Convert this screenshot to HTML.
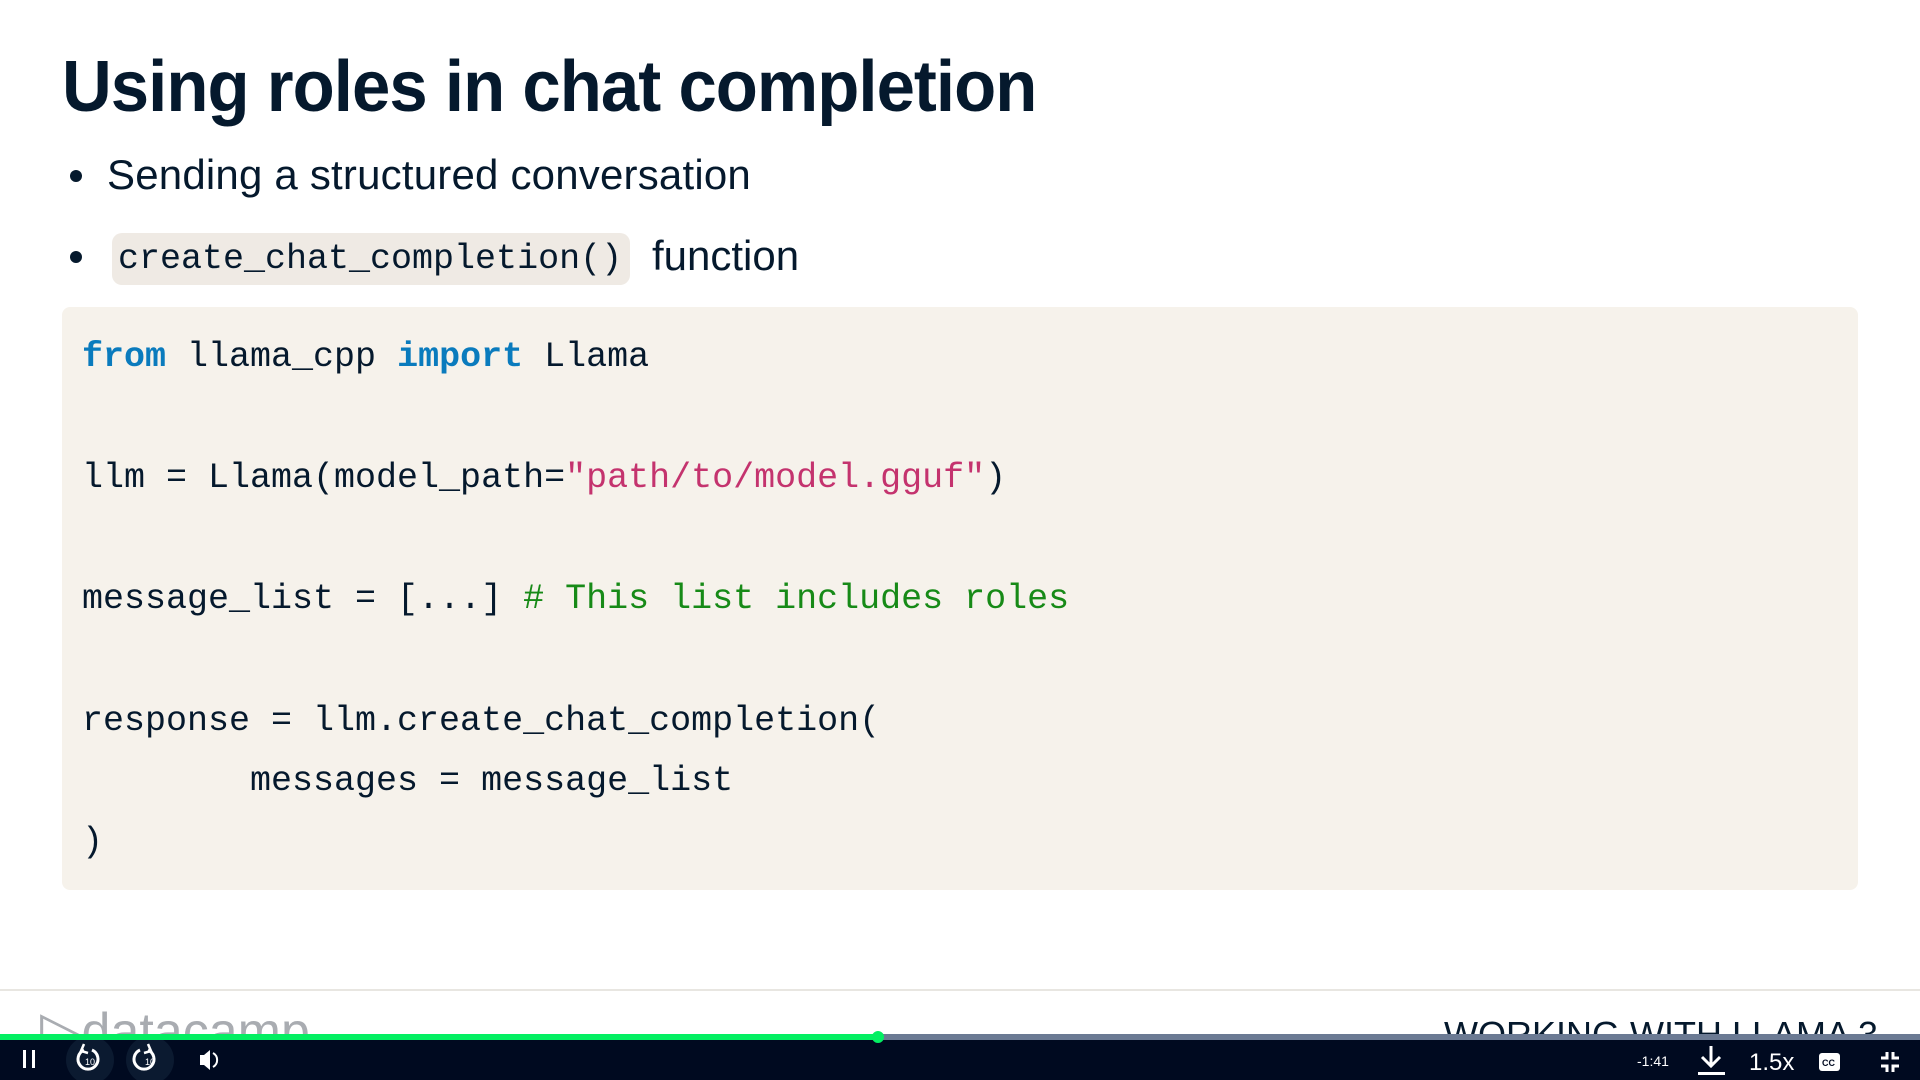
<!DOCTYPE html>
<html><head><meta charset="utf-8"><style>
html,body{margin:0;padding:0;width:1920px;height:1080px;overflow:hidden;background:#fff;font-family:"Liberation Sans",sans-serif;color:#05192d}
.abs{position:absolute;white-space:pre}
.title{left:62px;top:42px;font-size:72px;font-weight:bold;line-height:90px;transform-origin:left top;transform:scaleX(0.957);letter-spacing:-1px}
.b{font-size:42px;line-height:50px}
.dot{width:12px;height:12px;border-radius:50%;background:#05192d;position:absolute}
.mono{font-family:"Liberation Mono",monospace}
.code{left:62px;top:307px;width:1796px;height:583px;background:#f6f2eb;border-radius:8px;position:absolute}
.lines{left:82px;top:327px;font-size:35px;line-height:60.6px;color:#05192d}
.kw{color:#0a7bbd;font-weight:bold}.st{color:#c4336e}.cm{color:#178a17}
</style></head><body>
<div class="abs title">Using roles in chat completion</div>
<div class="dot" style="left:70px;top:170px"></div>
<div class="abs b" style="left:107px;top:150px;letter-spacing:0.2px">Sending a structured conversation</div>
<div class="dot" style="left:70px;top:251px"></div>
<div class="abs" style="left:112px;top:233px;width:518px;height:52px;background:#efeae4;border-radius:10px"></div>
<div class="abs mono" style="left:118px;top:233px;font-size:35px;line-height:52px">create_chat_completion()</div>
<div class="abs b" style="left:652px;top:231px">function</div>
<div class="code"></div>
<div class="abs mono lines"><span class="kw">from</span> llama_cpp <span class="kw">import</span> Llama

llm = Llama(model_path=<span class="st">"path/to/model.gguf"</span>)

message_list = [...] <span class="cm"># This list includes roles</span>

response = llm.create_chat_completion(
        messages = message_list
)</div>
<div class="abs" style="left:0;top:989px;width:1920px;height:2px;background:#e8e6e1"></div>
<div class="abs" style="left:40px;top:1003px;font-size:52px;color:#a9acb1;line-height:56px"><span style="font-size:54px">&#9655;</span>datacamp</div>
<div class="abs" style="left:1444px;top:1013px;font-size:36px;line-height:44px;color:#05192d">WORKING WITH LLAMA 3</div>
<div class="abs" style="left:0;top:1039px;width:1920px;height:41px;background:#000a20"></div>
<div class="abs" style="left:0;top:1034px;width:1920px;height:6px;background:#6b7a93"></div>
<div class="abs" style="left:0;top:1034px;width:878px;height:6px;background:#03ef62"></div>
<div class="abs" style="left:872px;top:1031px;width:12px;height:12px;border-radius:50%;background:#03ef62"></div>
<svg class="abs" style="left:0;top:1040px" width="1920" height="40">
<rect x="23" y="10" width="3" height="18" fill="#fff"/><rect x="32" y="10" width="3" height="18" fill="#fff"/>
<circle cx="90" cy="20" r="24" fill="#0b1a30"/><circle cx="150" cy="20" r="24" fill="#0b1a30"/>
<path d="M84 10a10 10 0 1 0 8 0" stroke="#fff" stroke-width="3" fill="none"/><path d="M84 4l-3 7 7 2" stroke="#fff" stroke-width="2.5" fill="none"/>
<text x="90" y="25" font-size="9" fill="#fff" text-anchor="middle" font-family="Liberation Sans">10</text>
<path d="M148 10a10 10 0 1 1 -8 0" stroke="#fff" stroke-width="3" fill="none"/><path d="M148 4l3 7 -7 2" stroke="#fff" stroke-width="2.5" fill="none"/>
<text x="150" y="25" font-size="9" fill="#fff" text-anchor="middle" font-family="Liberation Sans">10</text>
<path d="M200 15h4l6-5v20l-6-5h-4z" fill="#fff"/><path d="M213 13a8 8 0 0 1 0 14" stroke="#fff" stroke-width="2" fill="none"/>
<text x="1637" y="26" font-size="14" fill="#fff" font-family="Liberation Sans">-1:41</text>
<path d="M1711 6v20M1702 17l9 9 9-9" stroke="#fff" stroke-width="3" fill="none"/><rect x="1698" y="32" width="27" height="3" fill="#fff"/>
<text x="1749" y="30" font-size="24" fill="#fff" font-family="Liberation Sans">1.5x</text>
<rect x="1819" y="13" width="21" height="18" rx="3" fill="#fff"/><text x="1822" y="26" font-size="9" font-weight="bold" fill="#000a20" font-family="Liberation Sans">CC</text>
<path d="M1887 12v6h-6M1893 12v6h6M1887 32v-6h-6M1893 32v-6h6" stroke="#fff" stroke-width="3" fill="none"/>
</svg>
</body></html>
